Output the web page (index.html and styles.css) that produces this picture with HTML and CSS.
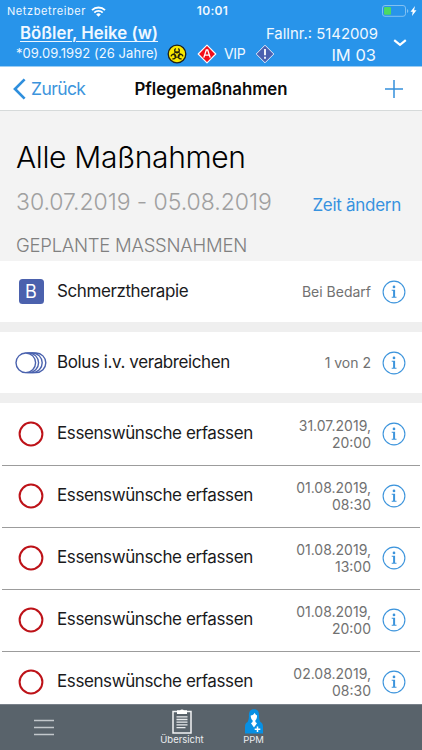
FILE: index.html
```html
<!DOCTYPE html>
<html lang="de">
<head>
<meta charset="utf-8">
<title>Pflegemaßnahmen</title>
<link rel="stylesheet" href="styles.css">
</head>
<body>
<svg width="0" height="0" class="defs">
  <symbol id="info" viewBox="0 0 24 24">
    <circle cx="12" cy="12" r="10.9" fill="none" stroke="#3c94dc" stroke-width="1.1"/>
    <circle cx="12" cy="6.9" r="1.35" fill="#3c94dc"/>
    <path d="M9.7 9.7h3.4v7.1h1.4v1h-4.8v-1h1.4v-6.1H9.7z" fill="#3c94dc"/>
  </symbol>
  <symbol id="open" viewBox="0 0 26 26">
    <circle cx="13" cy="13" r="11.4" fill="none" stroke="#bd1218" stroke-width="2"/>
  </symbol>
</svg>
<div class="screen">
  <header class="patient">
    <div class="status">
      <span class="carrier"><span>Netzbetreiber</span>
        <svg width="15" height="11" viewBox="0 0 15 11"><g fill="none" stroke="#fff" stroke-width="1.9"><path d="M1 4.1a9.3 9.3 0 0 1 13 0"/><path d="M3.3 6.6a6 6 0 0 1 8.4 0"/></g><path d="M5.2 8.4a3.3 3.3 0 0 1 4.6 0L7.5 10.8z" fill="#fff"/></svg>
      </span>
      <span class="clock">10:01</span>
      <svg class="battery" width="36" height="12" viewBox="0 0 36 12"><rect x=".5" y=".5" width="23" height="10.8" rx="2.5" fill="none" stroke="#83c1f2"/><rect x="2" y="2" width="7" height="7.8" rx="1" fill="#4cd964"/><path d="M25 4v4q1.3-.7 1.3-2T25 4z" fill="#83c1f2"/><path d="M33 1l-4.5 5.8h2.2L30 11l4.5-5.7h-2.4z" fill="#fff"/></svg>
    </div>
    <div class="record">
      <div class="person">
        <div class="name">Bößler, Heike (w)</div>
        <div class="meta">
          <span class="birth">*09.09.1992 (26 Jahre)</span>
          <svg class="bio" width="20" height="20" viewBox="0 0 20 20"><circle cx="10" cy="10" r="8.8" fill="#f8e800" stroke="#202018" stroke-width="1.3"/><g fill="none" stroke="#25220a" stroke-width="1.4"><path id="horn" d="M8.700 4.500a2.300 2.300 0 1 0 2.600 0"/><use href="#horn" transform="rotate(120 10 10.500)"/><use href="#horn" transform="rotate(240 10 10.500)"/></g><circle cx="10" cy="10.500" r="3" fill="none" stroke="#25220a" stroke-width=".8"/><circle cx="10" cy="10.500" r=".7" fill="#f8e800"/></svg>
          <svg class="allergy" width="20" height="20" viewBox="0 0 20 20"><path d="M10 1.2L18.8 10 10 18.8 1.2 10z" fill="#f30d19" stroke="#fff" stroke-width="1.1" stroke-linejoin="round"/><path d="M6.8 13.6L9.3 6h1.4l2.5 7.6M7.8 11.2h4.4" fill="none" stroke="#fff" stroke-width="1.3"/></svg>
          <span class="vip">VIP</span>
          <svg class="alert" width="20" height="20" viewBox="0 0 20 20"><path d="M10 1.2L18.8 10 10 18.8 1.2 10z" fill="#4b60b0" stroke="#e2e9f8" stroke-width="1" stroke-linejoin="round"/><path d="M10 5v6.3M10 12.8v2" stroke="#fff" stroke-width="1.8"/></svg>
        </div>
      </div>
      <div class="case">
        <div class="number">Fallnr.: 5142009</div>
        <div class="room">IM 03</div>
      </div>
      <svg class="chevron" width="14" height="8" viewBox="0 0 14 8"><path d="M1.2 1.2L7 5.8l5.8-4.6" fill="none" stroke="#fff" stroke-width="2.2"/></svg>
    </div>
  </header>
  <nav class="navbar">
    <a class="back"><svg width="13" height="22" viewBox="0 0 13 22"><path d="M11.6 1.4L2 11l9.6 9.6" fill="none" stroke="#2f8fdd" stroke-width="2.7"/></svg><span>Zurück</span></a>
    <h1>Pflegemaßnahmen</h1>
    <svg class="add" width="18" height="18" viewBox="0 0 18 18"><path d="M9 0v18M0 9h18" stroke="#3490dc" stroke-width="1.5"/></svg>
  </nav>
  <section class="intro">
    <h2>Alle Maßnahmen</h2>
    <div class="period"><span class="range">30.07.2019 - 05.08.2019</span><a class="change">Zeit ändern</a></div>
    <h3>GEPLANTE MASSNAHMEN</h3>
  </section>
  <main>
    <div class="row card">
      <div class="icon"><span class="letter">B</span></div>
      <div class="label">Schmerztherapie</div>
      <div class="when">Bei Bedarf</div>
      <svg class="info"><use href="#info"/></svg>
    </div>
    <div class="row card">
      <div class="icon"><svg width="32" height="22" viewBox="0 0 32 22"><g fill="#fff" stroke="#4a62ae" stroke-width="1.4"><rect x="7.5" y="1" width="23.3" height="19.6" rx="9.8"/><rect x="5" y="1" width="22.200" height="19.6" rx="9.8"/><rect x="3" y="1" width="20.6" height="19.6" rx="9.8"/><rect x="1" y="1" width="19.6" height="19.6" rx="9.8"/></g></svg></div>
      <div class="label">Bolus i.v. verabreichen</div>
      <div class="when">1 von 2</div>
      <svg class="info"><use href="#info"/></svg>
    </div>
    <div class="list">
      <div class="row"><div class="icon"><svg class="open"><use href="#open"/></svg></div><div class="label">Essenswünsche erfassen</div><div class="when">31.07.2019,<br>20:00</div><svg class="info"><use href="#info"/></svg></div>
      <div class="row"><div class="icon"><svg class="open"><use href="#open"/></svg></div><div class="label">Essenswünsche erfassen</div><div class="when">01.08.2019,<br>08:30</div><svg class="info"><use href="#info"/></svg></div>
      <div class="row"><div class="icon"><svg class="open"><use href="#open"/></svg></div><div class="label">Essenswünsche erfassen</div><div class="when">01.08.2019,<br>13:00</div><svg class="info"><use href="#info"/></svg></div>
      <div class="row"><div class="icon"><svg class="open"><use href="#open"/></svg></div><div class="label">Essenswünsche erfassen</div><div class="when">01.08.2019,<br>20:00</div><svg class="info"><use href="#info"/></svg></div>
      <div class="row"><div class="icon"><svg class="open"><use href="#open"/></svg></div><div class="label">Essenswünsche erfassen</div><div class="when">02.08.2019,<br>08:30</div><svg class="info"><use href="#info"/></svg></div>
    </div>
  </main>
  <footer class="tabs">
    <svg class="menu" width="20" height="17" viewBox="0 0 20 17"><path d="M0 1.5h20M0 8.5h20M0 15.5h20" stroke="#c3c8cc" stroke-width="1.5"/></svg>
    <div class="tab overview">
      <svg width="20" height="25" viewBox="0 0 20 25"><path d="M1 2.5h18v21.5H1z" fill="none" stroke="#f2f4f5" stroke-width="1.5"/><path d="M5 1.3h3.1a2 1.3 0 0 1 3.8 0H15V5H5z" fill="#fff"/><path d="M4.5 7.8h11M4.5 10.5h11M4.5 13.2h11M4.5 15.9h11M4.5 18.6h9" stroke="#e9ecee" stroke-width="1.3"/></svg>
      <span>Übersicht</span>
    </div>
    <div class="tab ppm">
      <svg width="20" height="25" viewBox="0 0 20 25"><path d="M10 .2C5.7.2 4.7 3.4 4.9 7.2c0 2.4-.5 4.2-1.3 5.7C1.8 13.6 1 15.4 1 18v6.4h18V18c0-2.6-.8-4.4-2.6-5.1-.8-1.5-1.3-3.3-1.3-5.7C15.3 3.4 14.3.2 10 .2z" fill="#0790e4"/><path d="M6.700 6.500c1.900-.2 3.200-1 4.100-2.700.4 1.400 1.100 2.200 2.300 2.700 0 2.100-.5 3.800-1.700 4.800v1.800l1.600 1.100-3 4.200-3-4.200 1.600-1.100v-1.800C7.200 10.300 6.700 8.600 6.700 6.500z" fill="#fff"/><path d="M13.500 17.500v5.600M10.700 20.300h5.600" stroke="#fff" stroke-width="1.500"/></svg>
      <span>PPM</span>
    </div>
  </footer>
</div>
</body>
</html>
```
FILE: styles.css
```css
* { box-sizing: border-box; margin: 0; padding: 0; }
body { font-family: Inter, "Liberation Sans", sans-serif; background: #fff; color: #1a1a1c; font-weight: 400; }
svg { display: block; flex: none; }
.defs { position: absolute; }
.screen { width: 422px; height: 750px; display: flex; flex-direction: column; overflow: hidden; white-space: nowrap; }
.patient { height: 67px; background: #2894ea; color: #f0f8ff; flex: none; border-bottom: 1px solid #9bcdf3; }
.status { height: 22px; display: grid; grid-template-columns: 1fr auto 1fr; align-items: center; padding: 0 4px 0 7px; font-size: 11px; line-height: 22px; }
.carrier { display: flex; align-items: center; gap: 5px; letter-spacing: .58px; }
.clock { font-weight: 600; font-size: 12px; letter-spacing: .35px; }
.battery { justify-self: end; }
.record { display: flex; height: 44px; }
.person { width: 278px; flex: none; }
.name { margin-left: 20px; height: 23px; line-height: 23px; font-size: 16.8px; font-weight: 600; text-decoration: underline; text-decoration-thickness: 1px; text-underline-offset: 2px; }
.meta { display: flex; align-items: center; height: 17px; padding-left: 16px; font-size: 13px; letter-spacing: .05px; }
.birth { width: 151px; flex: none; line-height: 16px; padding-bottom: 1px; }
.allergy { margin-left: 10px; }
.vip { margin-left: 7px; width: 24px; font-size: 14px; letter-spacing: -.3px; }
.alert { margin-left: 7px; }
.case { width: 120px; margin-left: -20px; text-align: right; }
.number { font-size: 14.9px; line-height: 25px; height: 22px; }
.room { font-size: 16.5px; line-height: 22px; padding-right: 2px; }
.chevron { margin: 17px 0 0 15px; }
.navbar { height: 44px; display: grid; grid-template-columns: 1fr auto 1fr; align-items: center; padding: 0 19px; border-bottom: 1px solid #d6dada; flex: none; }
.back { display: flex; align-items: center; gap: 5px; font-size: 17.5px; letter-spacing: -.6px; color: #3c94dc; margin-left: -6px; }
.navbar h1 { font-size: 16.8px; font-weight: 600; color: #0a0a0a; }
.add { justify-self: end; }
.intro { height: 150px; background: #f3f3f3; padding: 27px 21px 0 16px; flex: none; }
.intro h2 { font-size: 30px; line-height: 38px; font-weight: 300; letter-spacing: -.36px; color: #000; }
.period { display: flex; justify-content: space-between; height: 52px; line-height: 53px; }
.range { font-size: 23px; font-weight: 300; letter-spacing: -.05px; color: #a0a0a0; }
.change { font-size: 17px; letter-spacing: -.28px; color: #3792df; line-height: 58px; }
.intro h3 { font-size: 18.5px; font-weight: 300; line-height: 35px; letter-spacing: -.25px; color: #808080; }
main { background: #efefef; flex: 1; min-height: 0; overflow: hidden; }
.row { display: flex; align-items: center; height: 62px; padding-right: 16px; background: #fff; }
.card { height: 61px; margin-bottom: 10px; }
.list { background: #fff; padding: 0 2px; }
.list .row { padding-right: 14px; padding-bottom: 1px; border-bottom: 1px solid #9c9c9c; }
.list .row:first-child { height: 63px; padding-bottom: 0; }
.icon { width: 57px; flex: none; display: flex; justify-content: center; padding-left: 5px; }
.list .icon { width: 55px; padding-left: 3px; }
.letter { width: 25px; height: 25px; border-radius: 3.5px; background: #4b61ad; color: #fff; font-size: 18px; line-height: 25px; text-align: center; }
.open { width: 26px; height: 26px; }
.label { flex: 1; font-size: 17px; line-height: 22px; letter-spacing: -.4px; padding-bottom: 2px; }
.when { font-size: 14px; line-height: 17px; text-align: right; color: #717171; margin-right: 11px; }
.info { width: 24px; height: 24px; }
.tabs { height: 46px; flex: none; background: #59636b; display: flex; border-top: 1px solid #79818a; color: #eceef0; }
.menu { margin: 14px 0 0 34px; }
.tab { width: 60px; display: flex; flex-direction: column; align-items: center; font-size: 9.5px; line-height: 12px; padding-top: 4px; }
.overview { margin-left: 98px; }
.ppm { margin-left: 11.5px; }
```
